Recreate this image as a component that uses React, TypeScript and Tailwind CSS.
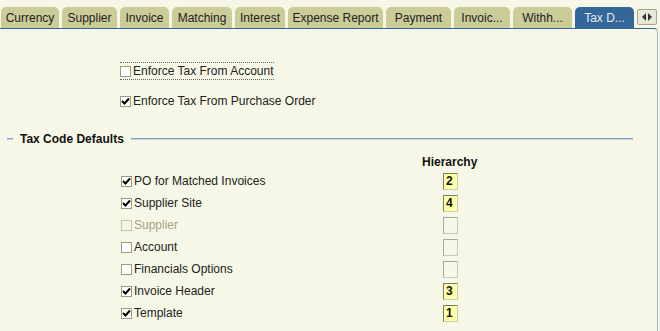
import React from "react";

const tabs: { label: string; w: number; active?: boolean }[] = [
  { label: "Currency", w: 58 },
  { label: "Supplier", w: 55 },
  { label: "Invoice", w: 49 },
  { label: "Matching", w: 60 },
  { label: "Interest", w: 50 },
  { label: "Expense Report", w: 95 },
  { label: "Payment", w: 65 },
  { label: "Invoic...", w: 56 },
  { label: "Withh...", w: 59 },
  { label: "Tax D...", w: 59, active: true },
];

function Check({ checked, disabled }: { checked?: boolean; disabled?: boolean }) {
  return (
    <span
      className={
        "inline-flex w-[11px] h-[11px] border shrink-0 items-center justify-center " +
        (disabled ? "border-[#c4c4ac] bg-[#f7f7e7]" : "border-[#9c9c80] bg-white")
      }
    >
      {checked && (
        <svg width="9" height="9" viewBox="0 0 9 9">
          <path d="M1 4 L3.5 6.5 L8 1.5" stroke="#000" strokeWidth="2" fill="none" />
        </svg>
      )}
    </span>
  );
}

const rows: { label: string; checked: boolean; disabled?: boolean; value: string }[] = [
  { label: "PO for Matched Invoices", checked: true, value: "2" },
  { label: "Supplier Site", checked: true, value: "4" },
  { label: "Supplier", checked: false, disabled: true, value: "" },
  { label: "Account", checked: false, value: "" },
  { label: "Financials Options", checked: false, value: "" },
  { label: "Invoice Header", checked: true, value: "3" },
  { label: "Template", checked: true, value: "1" },
];

export default function App() {
  return (
    <div className="w-[660px] h-[331px] overflow-hidden bg-[#f7f7e7] font-['Liberation_Sans',Arial,sans-serif] text-[12px] text-[#222]">
      <div className="flex items-end h-[28px] pl-[1px] gap-[3px]">
        {tabs.map((t) => (
          <div
            key={t.label}
            style={{ width: t.w }}
            className={
              "h-[21px] rounded-t-[5px] flex items-center justify-center pt-[1px] " +
              (t.active ? "bg-[#336699] text-[#e4ecf4]" : "bg-[#cccc99] text-[#222]")
            }
          >
            {t.label}
          </div>
        ))}
        <div className="mb-[3px] w-[20px] h-[16px] bg-[#e9e9d9] border border-[#a8a890] rounded-[2px] flex items-center justify-center">
          <svg width="10" height="8" viewBox="0 0 10 8">
            <path d="M4 0 L0 4 L4 8 Z" fill="#333" />
            <path d="M6 0 L10 4 L6 8 Z" fill="#333" />
          </svg>
        </div>
      </div>
      <div className="h-[303px] mr-[2px] border-t border-t-[#336699] border-r border-r-[#9fb7d0] rounded-tr-[4px]">
        <div className="pt-[33px] pl-[120px]">
          <div className="w-[154px] h-[18px] border-y border-dotted border-[#666] flex items-center gap-[2px]">
            <Check />
            <span>Enforce Tax From Account</span>
          </div>
          <div className="h-[18px] mt-[12px] flex items-center gap-[2px]">
            <Check checked />
            <span>Enforce Tax From Purchase Order</span>
          </div>
        </div>
        <div className="mt-[20px] h-[18px] flex items-center pl-[7px] pr-[24px]">
          <div className="w-[6px] h-[2px] border-t border-t-[#7f9fc2] border-b border-b-[#c8d6e4]" />
          <span className="px-[7px] font-bold text-[#111]">Tax Code Defaults</span>
          <div className="flex-1 h-[2px] border-t border-t-[#7f9fc2] border-b border-b-[#c8d6e4]" />
        </div>
        <div className="mt-[6px] h-[16px] pl-[422px] flex items-center font-bold text-[#111]">Hierarchy</div>
        <div className="mt-0 flex flex-col">
          {rows.map((r) => (
            <div key={r.label} className="h-[22px] flex items-center pl-[121px]">
              <div className="w-[322px] flex items-center gap-[2px]">
                <Check checked={r.checked} disabled={r.disabled} />
                <span className={r.disabled ? "text-[#a3a384]" : ""}>{r.label}</span>
              </div>
              <div
                className={
                  "w-[15px] h-[17px] border border-t-[#7c7c6c] border-l-[#7c7c6c] border-r-[#c9c9b4] border-b-[#c9c9b4] pl-[2px] flex items-center font-bold text-[#111] " +
                  (r.value ? "bg-[#ffffa6]" : "bg-[#f7f7e9] border-t-[#a8a898] border-l-[#a8a898]")
                }
              >
                {r.value}
              </div>
            </div>
          ))}
        </div>
      </div>
    </div>
  );
}
